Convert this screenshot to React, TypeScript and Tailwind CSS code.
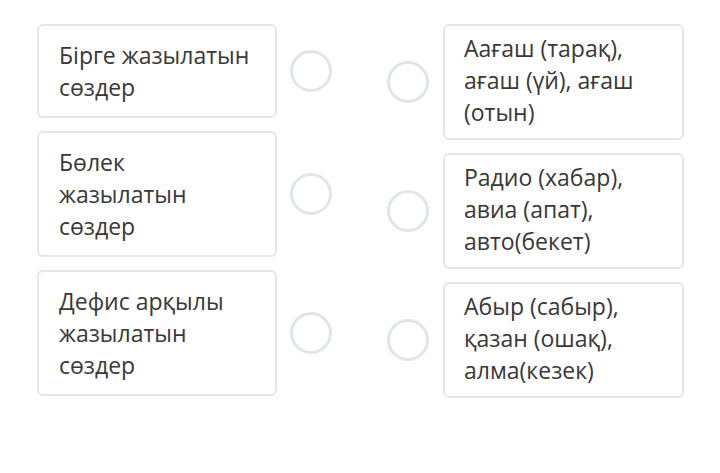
const leftItems = [
  { text: 'Бірге жазылатын сөздер', h: 'h-[94px]' },
  { text: 'Бөлек жазылатын сөздер', h: 'h-[126px]' },
  { text: 'Дефис арқылы жазылатын сөздер', h: 'h-[126px]' },
];

const rightItems = [
  'Аағаш (тарақ), ағаш (үй), ағаш (отын)',
  'Радио (хабар), авиа (апат), авто(бекет)',
  'Абыр (сабыр), қазан (ошақ), алма(кезек)',
];

function Circle() {
  return <div className="size-[42px] shrink-0 rounded-full border-[3px] border-[#e1e5e7] bg-white" />;
}

export default function App() {
  return (
    <div className="h-[473px] w-[720px] bg-white font-['Open_Sans',sans-serif] text-[23px] leading-[32px] text-[#383838]">
      <div className="flex pl-[37px] pt-[24px]">
        <div className="flex flex-col gap-[13px]">
          {leftItems.map((item, i) => (
            <div key={i} className="flex items-center">
              <div className={`${item.h} w-[240px] rounded-md border-2 border-[#e6e6e6] pl-[20px] pr-[22px] pt-[13px]`}>
                {item.text}
              </div>
              <div className="ml-[13px]">
                <Circle />
              </div>
            </div>
          ))}
        </div>
        <div className="ml-[55px] flex flex-col gap-[13px]">
          {rightItems.map((text, i) => (
            <div key={i} className="flex items-center">
              <Circle />
              <div className="ml-[14px] flex h-[116px] w-[241px] items-center rounded-md border-2 border-[#e6e6e6] pl-[19px] pr-[19px] pb-[4px]">
                {text}
              </div>
            </div>
          ))}
        </div>
      </div>
    </div>
  );
}
